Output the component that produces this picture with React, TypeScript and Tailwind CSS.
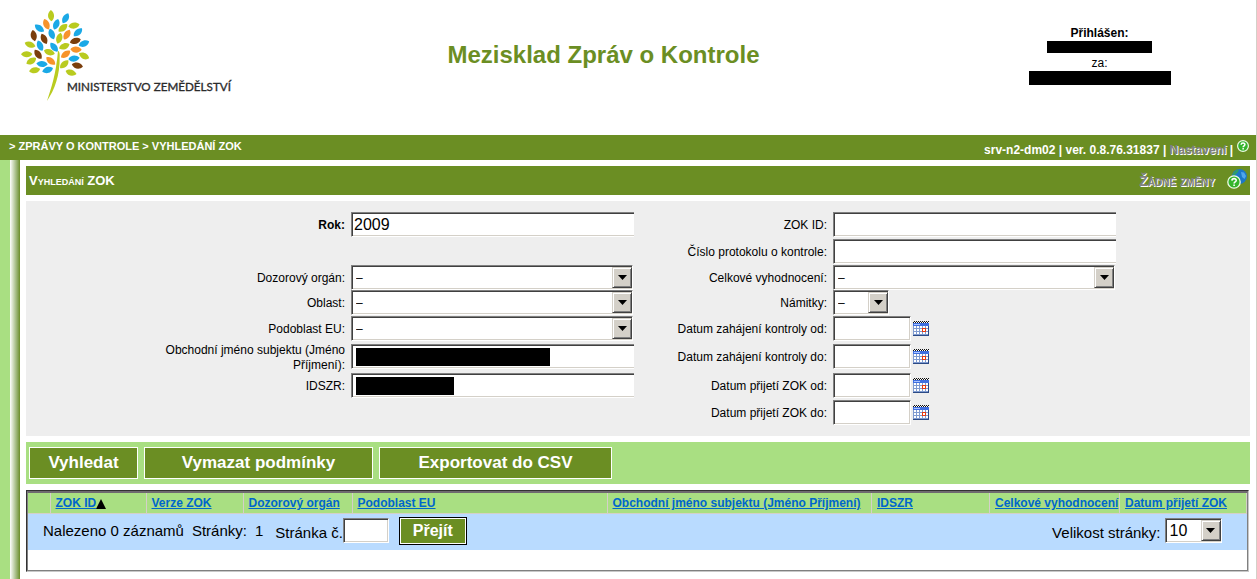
import { ReactNode } from 'react';

// x, y, rotation and color of each leaf in the logo
const leaves: [number, number, number, string][] = [
    [153, 47, 88, '#b9cb1f'],
    [197, 55, -60, '#1ba9e6'],
    [139, 73, 68, '#f7932b'],
    [169, 73, -68, '#1ba9e6'],
    [222, 77, -8, '#b9cb1f'],
    [118, 85, 38, '#1ba9e6'],
    [189, 84, -38, '#b9cb1f'],
    [234, 97, -42, '#1ba9e6'],
    [101, 107, 80, '#7a3e0c'],
    [155, 102, 70, '#1ba9e6'],
    [201, 104, -58, '#f7932b'],
    [132, 117, 65, '#7a3e0c'],
    [178, 115, -72, '#b9cb1f'],
    [226, 123, -15, '#7a3e0c'],
    [90, 134, 20, '#b9cb1f'],
    [120, 137, 68, '#1ba9e6'],
    [162, 142, 52, '#1ba9e6'],
    [252, 131, -22, '#1ba9e6'],
    [193, 139, -22, '#b9cb1f'],
    [80, 163, 0, '#b9cb1f'],
    [114, 163, 55, '#7a3e0c'],
    [148, 157, 18, '#b9cb1f'],
    [228, 149, 5, '#f7932b'],
    [197, 163, -35, '#f7932b'],
    [252, 168, 28, '#b9cb1f'],
    [94, 183, -30, '#b9cb1f'],
    [126, 192, 5, '#1ba9e6'],
    [152, 183, 40, '#f7932b'],
    [222, 176, -5, '#1ba9e6'],
    [193, 193, -42, '#b9cb1f'],
    [232, 197, 12, '#7a3e0c'],
    [104, 211, -10, '#b9cb1f'],
    [143, 210, -18, '#1ba9e6'],
    [213, 218, 18, '#b9cb1f'],
];

const columns = [
    { label: '', width: 'w-[22px]' },
    { label: 'ZOK ID', width: 'w-[96px]', sorted: true },
    { label: 'Verze ZOK', width: 'w-[97px]' },
    { label: 'Dozorový orgán', width: 'w-[109px]' },
    { label: 'Podoblast EU', width: 'w-[255px]' },
    { label: 'Obchodní jméno subjektu (Jméno Příjmení)', width: '' },
    { label: 'IDSZR', width: 'w-[118px]' },
    { label: 'Celkové vyhodnocení', width: 'w-[130px]' },
    { label: 'Datum přijetí ZOK', width: 'w-[127px]' },
];

const fieldBase = 'h-[25px] border border-t-[#808080] border-l-[#808080] border-r-white border-b-white bg-white outline-none';
const sunken = 'shadow-[inset_1px_1px_0_#404040,inset_-1px_-1px_0_#d4d0c8]';

function Logo() {
    return (
        <svg viewBox="0 0 780 330" className="h-[110px] w-[260px]" role="img" aria-label="Ministerstvo zemědělství">
            {leaves.map(([x, y, angle, color]) => (
                <path
                    key={`${x}-${y}`}
                    d="M-17 0 C-10 -11 7 -13 17 -1 C10 11 -7 13 -17 0Z"
                    transform={`translate(${x} ${y}) rotate(${angle})`}
                    fill={color}
                />
            ))}
            <path d="M174 152 C178 154 180 160 179 172 C180 225 164 270 141 303 C154 262 168 224 174 152Z" fill="#b9cb1f" />
            <text x="201" y="273" fontFamily="Lato, sans-serif" fontSize="35" fill="#2b2b2b" stroke="#2b2b2b">
                MINISTERSTVO ZEMĚDĚLSTVÍ
            </text>
        </svg>
    );
}

function HelpIcon({ className }: { className: string }) {
    return (
        <svg viewBox="0 0 12 12" className={className} aria-hidden="true">
            <circle cx="6" cy="6" r="5.4" fill="#35b52c" stroke="#eefbe8" strokeWidth="1.2" />
            <path d="M4.1 4.7 C4.2 2.6 7.9 2.6 7.9 4.6 C7.9 5.8 6.1 5.8 6.1 7.2" fill="none" stroke="#fff" strokeWidth="1.5" />
            <path d="M5.4 8h1.5v1.5H5.4z" fill="#fff" />
        </svg>
    );
}

function GlobeHelpIcon() {
    return (
        <svg viewBox="0 0 20 20" className="h-5 w-5" aria-hidden="true">
            <circle cx="12.500" cy="7.500" r="7.400" fill="#1b78c8" />
            <path d="M6 4.500 C8 1.500 10 .6 12 .4 L11 3 L8.500 5.500 L6 7Z" fill="#2f9e6a" />
            <path d="M14 3 L17 3.500 L19 7 L17.500 10 L15 8Z" fill="#4fa6ea" />
            <circle cx="7" cy="13" r="6.200" fill="#35b52c" stroke="#eefbe8" strokeWidth="1.300" />
            <path d="M4.900 11.600 C5 9 9.200 9 9.200 11.400 C9.200 12.900 7.100 12.900 7.100 14.500" fill="none" stroke="#fff" strokeWidth="1.600" />
            <path d="M6.300 15.400h1.600V17H6.300z" fill="#fff" />
        </svg>
    );
}

function CalendarIcon() {
    return (
        <svg viewBox="0 0 16 16" className="h-4 w-4" shapeRendering="crispEdges" aria-hidden="true">
            <rect y="1" width="16" height="14" fill="#7f9bd0" />
            <path d="M0 1.5h16" stroke="#fff" />
            <path d="M1 .5h15M0 1.5h16" stroke="#111" strokeDasharray="1 1" />
            <rect y="2" width="16" height="3" fill="#3f6fe0" />
            <rect x="1" y="3" width="6" height="1" fill="#a9c4ff" />
            <g fill="#fff">
                {[5, 8, 11].map((y) => [1, 4, 7, 10, 13].map((x) => <rect key={`${x}-${y}`} x={x} y={y} width="2" height="2" />))}
            </g>
            <rect x="9.5" y="7.5" width="3" height="3" fill="#fff" stroke="#e63a10" />
            <path d="M0 14.5h16M15.5 5v10" stroke="#2b4a86" />
        </svg>
    );
}

function Label({ htmlFor, bold, children }: { htmlFor: string; bold?: boolean; children: ReactNode }) {
    return (
        <div className="flex h-[27px] items-center justify-end pr-[6px]">
            <label htmlFor={htmlFor} className={`max-w-[200px] text-right leading-[15px] ${bold ? 'font-bold' : ''}`}>
                {children}
            </label>
        </div>
    );
}

// Redacted value is covered with a black bar
function TextField({ id, value, redacted }: { id: string; value?: string; redacted?: string }) {
    return (
        <div className="relative w-[283px]">
            <input
                id={id}
                type="text"
                defaultValue={value}
                className={`${fieldBase} w-full border-r-0 px-[2px] text-base shadow-[inset_1px_1px_0_#404040,inset_0_-1px_0_#d4d0c8]`}
            />
            {redacted && <span className={`absolute top-1 left-[5px] h-[18px] bg-black ${redacted}`} />}
        </div>
    );
}

function SelectField({ id, width, options = ['–'], large }: { id: string; width: string; options?: string[]; large?: boolean }) {
    return (
        <div className={`relative ${width}`}>
            <select
                id={id}
                className={`${fieldBase} ${sunken} block w-full appearance-none rounded-none pr-5 pl-1 ${large ? 'text-base leading-5' : 'text-xs'}`}
            >
                {options.map((option) => (
                    <option key={option}>{option}</option>
                ))}
            </select>
            <span className="pointer-events-none absolute top-[2px] right-px flex h-[21px] w-5 items-center justify-center border border-t-[#d4d0c8] border-r-[#404040] border-b-[#404040] border-l-[#d4d0c8] bg-[#d4d0c8] shadow-[inset_1px_1px_0_#fff,inset_-1px_-1px_0_#808080]">
                <svg viewBox="0 0 9 5" className="h-[5px] w-[9px]" aria-hidden="true">
                    <path d="M0 0h9L4.5 5z" />
                </svg>
            </span>
        </div>
    );
}

function DateField({ id }: { id: string }) {
    return (
        <div className="flex items-center gap-[2px]">
            <input id={id} type="text" className={`${fieldBase} ${sunken} w-[78px] px-[2px]`} />
            <button type="button" aria-label="Vybrat datum" className="h-[17px]">
                <CalendarIcon />
            </button>
        </div>
    );
}

function ActionButton({ width, children }: { width: string; children: ReactNode }) {
    return (
        <button type="button" className={`h-8 border border-white bg-[#6b8e23] text-[17px] leading-[30px] font-bold text-white ${width}`}>
            {children}
        </button>
    );
}

export default function App() {
    return (
        <div className="flex min-h-screen flex-col border-r border-[#d4d0c8] bg-white font-['Liberation_Sans',Arial,sans-serif] text-xs text-black">
            <header className="grid h-[135px] grid-cols-[264px_1fr_313px]">
                <Logo />
                <h1 className="pt-[39px] text-center text-2xl font-bold text-[#6b8e23]">Mezisklad Zpráv o Kontrole</h1>
                <div className="flex flex-col items-center pt-[25px] leading-4">
                    <div className="font-bold">Přihlášen:</div>
                    <div className="h-3 w-[105px] bg-black" />
                    <div className="pt-[2px]">za:</div>
                    <div className="h-[14px] w-[142px] bg-black" />
                </div>
            </header>

            <nav className="flex h-[25px] justify-between bg-[#6b8e23] pr-[7px] pl-[9px] font-bold text-white">
                <div className="text-[11px] leading-[22px]">&gt; ZPRÁVY O KONTROLE &gt; VYHLEDÁNÍ ZOK</div>
                <div className="flex gap-1">
                    <div className="leading-[30px]">
                        srv-n2-dm02 | ver. 0.8.76.31837 |{' '}
                        <a href="#" className="text-[#808080] [text-shadow:1px_1px_0_#fff]">
                            Nastavení
                        </a>{' '}
                        |
                    </div>
                    <a href="#" aria-label="Nápověda" className="pt-[5px]">
                        <HelpIcon className="h-3 w-3" />
                    </a>
                </div>
            </nav>

            <div className="flex flex-1">
                <div className="w-[10px] bg-[#a9df82]" />
                <div className="w-[10px] bg-linear-to-r from-white to-[#6b8e23]" />

                <main className="flex flex-1 flex-col gap-[6px] pt-[6px] pr-[6px] pl-[6px]">
                    <div className="flex h-[29px] items-center justify-between bg-[#6b8e23] pr-[3px] pl-[3px] text-white">
                        <h2 className="text-[13px] font-bold [font-variant:small-caps]">Vyhledání ZOK</h2>
                        <div className="flex items-center gap-3">
                            <span className="text-sm font-bold text-[#808080] [font-variant:small-caps] [text-shadow:1px_1px_0_#fff]">
                                Žádné změny
                            </span>
                            <a href="#" aria-label="Nápověda online" className="pb-1">
                                <GlobeHelpIcon />
                            </a>
                        </div>
                    </div>

                    {/* Search conditions */}
                    <form className="grid grid-cols-[325fr_283fr_199fr_417fr] grid-rows-[27px_26px_25px_26px_28px_29px_27px_25px] items-start bg-[#eeeeee] pt-[11px] pb-[11px]">
                        <Label htmlFor="rok" bold>
                            Rok:
                        </Label>
                        <TextField id="rok" value="2009" />
                        <Label htmlFor="zok-id">ZOK ID:</Label>
                        <TextField id="zok-id" />

                        <div className="col-span-2" />
                        <Label htmlFor="protokol">Číslo protokolu o kontrole:</Label>
                        <TextField id="protokol" />

                        <Label htmlFor="organ">Dozorový orgán:</Label>
                        <SelectField id="organ" width="w-[282px]" />
                        <Label htmlFor="vyhodnoceni">Celkové vyhodnocení:</Label>
                        <SelectField id="vyhodnoceni" width="w-[282px]" />

                        <Label htmlFor="oblast">Oblast:</Label>
                        <SelectField id="oblast" width="w-[282px]" />
                        <Label htmlFor="namitky">Námitky:</Label>
                        <SelectField id="namitky" width="w-[56px]" />

                        <Label htmlFor="podoblast">Podoblast EU:</Label>
                        <SelectField id="podoblast" width="w-[282px]" />
                        <Label htmlFor="zahajeni-od">Datum zahájení kontroly od:</Label>
                        <DateField id="zahajeni-od" />

                        <Label htmlFor="subjekt">Obchodní jméno subjektu (Jméno Příjmení):</Label>
                        <TextField id="subjekt" redacted="w-[194px]" />
                        <Label htmlFor="zahajeni-do">Datum zahájení kontroly do:</Label>
                        <DateField id="zahajeni-do" />

                        <Label htmlFor="idszr">IDSZR:</Label>
                        <TextField id="idszr" redacted="w-[98px]" />
                        <Label htmlFor="prijeti-od">Datum přijetí ZOK od:</Label>
                        <DateField id="prijeti-od" />

                        <div className="col-span-2" />
                        <Label htmlFor="prijeti-do">Datum přijetí ZOK do:</Label>
                        <DateField id="prijeti-do" />
                    </form>

                    <div className="flex gap-[6px] bg-[#a9df82] px-[3px] py-[5px]">
                        <ActionButton width="w-[109px]">Vyhledat</ActionButton>
                        <ActionButton width="w-[229px]">Vymazat podmínky</ActionButton>
                        <ActionButton width="w-[233px]">Exportovat do CSV</ActionButton>
                    </div>

                    {/* Results */}
                    <div className="mr-px border border-t-[#333333] border-r-[#c8c8c8] border-b-[#c8c8c8] border-l-[#333333]">
                        <div className="border border-t-2 border-[#808080] border-t-[#6f6a6f] pb-5">
                            <table className="w-full table-fixed border-collapse">
                                <thead>
                                    <tr className="h-5 bg-[#a9df82] text-left">
                                        {columns.map((column) => (
                                            <th
                                                key={column.label}
                                                className={`border-r border-b border-[#d4d0c8] p-0 pl-[5px] font-bold whitespace-nowrap ${column.width}`}
                                            >
                                                {column.label && (
                                                    <a href="#" className="text-[#0066cc] underline">
                                                        {column.label}
                                                    </a>
                                                )}
                                                {column.sorted && (
                                                    <svg viewBox="0 0 10 10" className="inline h-[10px] w-[10px]" aria-hidden="true">
                                                        <path d="M5 0L10 10H0z" />
                                                    </svg>
                                                )}
                                            </th>
                                        ))}
                                    </tr>
                                </thead>
                                <tbody>
                                    <tr className="bg-[#b9dbff] text-[15px]">
                                        <td colSpan={9} className="p-0">
                                            <div className="flex h-9 items-center justify-between pr-[25px] pb-[2px] pl-[15px]">
                                                <div className="flex items-center">
                                                    <span>Nalezeno 0 záznamů</span>
                                                    <span className="ml-2">Stránky:</span>
                                                    <span className="ml-2">1</span>
                                                    <label htmlFor="stranka" className="ml-3 pt-1">
                                                        Stránka č.
                                                    </label>
                                                    <input id="stranka" type="text" className={`${fieldBase} ${sunken} w-[46px] px-[2px]`} />
                                                    <button
                                                        type="button"
                                                        className="ml-[10px] h-7 w-[68px] border border-black bg-[#6b8e23] text-base leading-6 font-bold text-white shadow-[inset_0_0_0_1px_#fff]"
                                                    >
                                                        Přejít
                                                    </button>
                                                </div>
                                                <div className="flex items-center gap-1">
                                                    <label htmlFor="velikost" className="pt-1">
                                                        Velikost stránky:
                                                    </label>
                                                    <SelectField id="velikost" width="w-[57px]" options={['10', '20', '50']} large />
                                                </div>
                                            </div>
                                        </td>
                                    </tr>
                                </tbody>
                            </table>
                        </div>
                    </div>
                </main>
            </div>
        </div>
    );
}
